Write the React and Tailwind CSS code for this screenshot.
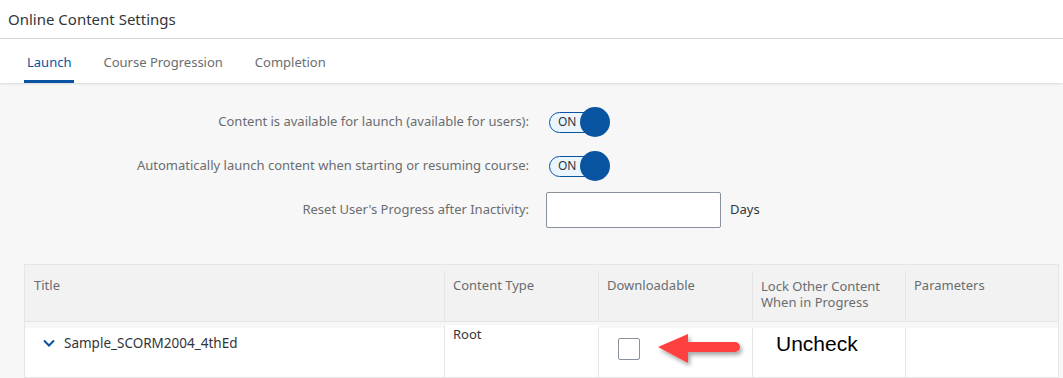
import React from "react";

function Toggle() {
  return (
    <div className="flex items-center">
      <div className="w-[47px] h-[21px] rounded-full border border-[#0854a0] bg-[#ebf5fe] flex items-center pl-[8px] text-[12px] text-[#32363a]">
        ON
      </div>
      <div className="w-[30px] h-[30px] rounded-full bg-[#0854a0] -ml-[16px]" />
    </div>
  );
}

function Arrow() {
  return (
    <svg width="90" height="40" viewBox="0 0 90 40" className="overflow-visible">
      <defs>
        <filter id="sh" x="-20%" y="-40%" width="150%" height="200%">
          <feDropShadow dx="2" dy="3" stdDeviation="2" floodColor="#000" floodOpacity="0.35" />
        </filter>
      </defs>
      <g filter="url(#sh)">
        <path d="M2 17 L32 4 L32 12 L79 12 A5 5 0 0 1 79 22 L32 22 L32 33 Z" fill="#ff4040" />
      </g>
    </svg>
  );
}

export default function App() {
  const font = { fontFamily: '"Noto Sans", "Liberation Sans", Arial, sans-serif' };
  return (
    <div className="w-[1063px] h-[378px] bg-[#f7f7f7] overflow-hidden" style={font}>
      <div className="h-[39px] bg-white flex items-center pl-[8px] text-[15px] text-[#32363a] border-b border-[#d9d9d9]">
        Online Content Settings
      </div>
      <div className="h-[44px] bg-white flex items-stretch pl-[24px] gap-[26px] text-[13px] shadow-[0_1px_2px_rgba(0,0,0,0.12)] relative">
        <div className="px-[3px] flex items-center text-[#0854a0] border-b-[3px] border-[#0854a0] pt-[7px]">Launch</div>
        <div className="px-[3px] flex items-center text-[#6a6d70] pt-[7px] border-b-[3px] border-transparent">Course Progression</div>
        <div className="px-[3px] flex items-center text-[#6a6d70] pt-[7px] border-b-[3px] border-transparent">Completion</div>
      </div>
      <div className="pt-[17px] text-[13px] text-[#6a6d70]">
        <div className="flex items-center h-[44px]">
          <div className="w-[529px] text-right">Content is available for launch (available for users):</div>
          <div className="ml-[20px]"><Toggle /></div>
        </div>
        <div className="flex items-center h-[44px]">
          <div className="w-[529px] text-right">Automatically launch content when starting or resuming course:</div>
          <div className="ml-[20px]"><Toggle /></div>
        </div>
        <div className="flex items-center h-[44px]">
          <div className="w-[529px] text-right">Reset User's Progress after Inactivity:</div>
          <div className="ml-[17px] w-[175px] h-[36px] bg-white border border-[#89919a] rounded-[2px]" />
          <div className="ml-[9px] text-[#32363a]">Days</div>
        </div>
      </div>
      <div className="ml-[24px] mt-[32px] w-[1035px] border border-[#e5e5e5] text-[13px]">
        <div className="grid grid-cols-[419px_154px_154px_153px_1fr] bg-[#f2f2f2] h-[56px] pt-[6px]">
          <div className="px-[9px] pt-[5px] text-[#6a6d70]">Title</div>
          <div className="px-[8px] pt-[5px] text-[#6a6d70] border-l border-[#e5e5e5]">Content Type</div>
          <div className="px-[8px] pt-[5px] text-[#6a6d70] border-l border-[#e5e5e5]">Downloadable</div>
          <div className="px-[8px] pt-[7px] text-[#6a6d70] border-l border-[#e5e5e5] leading-[16px]">Lock Other Content<br />When in Progress</div>
          <div className="px-[8px] pt-[5px] text-[#6a6d70] border-l border-[#e5e5e5]">Parameters</div>
        </div>
        <div className="border-t border-[#e5e5e5] grid grid-cols-[419px_154px_154px_153px_1fr] h-[56px]">
          <div className="bg-[#f7f7f7] h-[6px] col-span-5" />
          <div className="bg-white flex items-start pt-[5px] pl-[17px] text-[#32363a] text-[13.5px] h-[49px]">
            <svg width="14" height="14" viewBox="0 0 14 14" className="mt-[3px]">
              <path d="M2 4.5 L7 9.5 L12 4.5" fill="none" stroke="#0854a0" strokeWidth="2" />
            </svg>
            <span className="ml-[8px]">Sample_SCORM2004_4thEd</span>
          </div>
          <div className="bg-white border-l border-[#e5e5e5] px-[8px] pt-[0px] -mt-[3px] text-[#32363a]">Root</div>
          <div className="bg-white border-l border-[#e5e5e5] relative">
            <div className="absolute left-[19px] top-[10px] w-[22px] h-[22px] border border-[#89919a] rounded-[2px] bg-white" />
            <div className="absolute left-[57px] top-[2px]"><Arrow /></div>
          </div>
          <div className="bg-white border-l border-[#e5e5e5] pl-[23px] pt-[0px] text-[21px] text-black" style={{ fontFamily: '"Liberation Sans", Arial, sans-serif' }}>Uncheck</div>
          <div className="bg-white border-l border-[#e5e5e5]" />
        </div>
      </div>
    </div>
  );
}
